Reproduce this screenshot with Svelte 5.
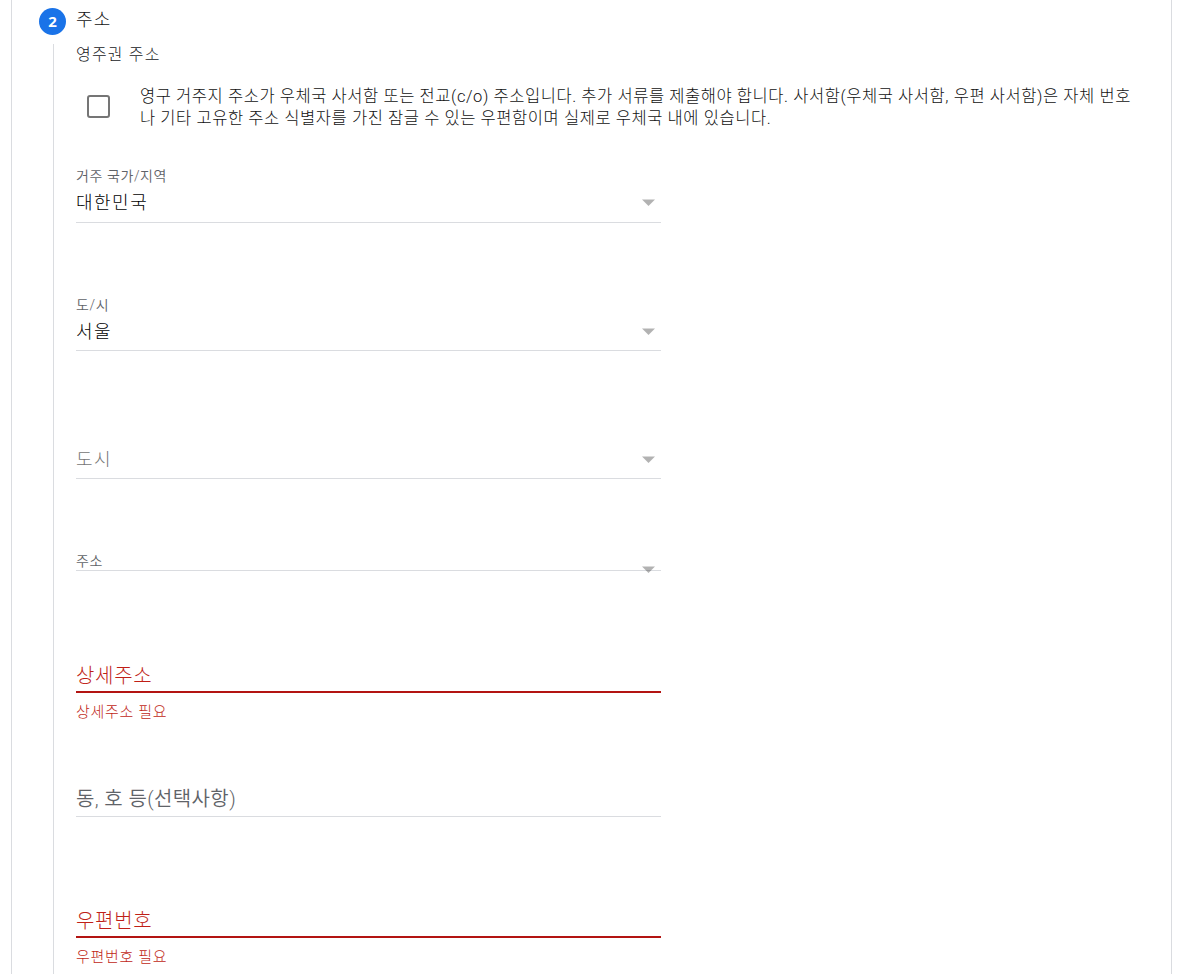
<script lang="ts">
	interface Field {
		id: string;
		kind: 'select' | 'text';
		label?: string;
		value?: string;
		placeholder?: string;
		error?: string;
	}

	const fields: Field[] = [
		{ id: 'country', kind: 'select', label: '거주 국가/지역', value: '대한민국' },
		{ id: 'province', kind: 'select', label: '도/시', value: '서울' },
		{ id: 'city', kind: 'select', placeholder: '도시' },
		{ id: 'street', kind: 'select', label: '주소' },
		{ id: 'detail', kind: 'text', placeholder: '상세주소', error: '상세주소 필요' },
		{ id: 'unit', kind: 'text', placeholder: '동, 호 등(선택사항)' },
		{ id: 'postal', kind: 'text', placeholder: '우편번호', error: '우편번호 필요' },
	];

	const poBoxText = [
		'영구 거주지 주소가 우체국 사서함 또는 전교(c/o) 주소입니다. 추가 서류를 제출해야 합니다. 사서함(우체국 사서함, 우편 사서함)은 자체 번호',
		'나 기타 고유한 주소 식별자를 가진 잠글 수 있는 우편함이며 실제로 우체국 내에 있습니다.',
	];

	let poBox = $state(false);
</script>

<main class="card">
	<div class="rail">
		<span class="step">2</span>
		<div class="line"></div>
	</div>

	<section class="content">
		<h2>주소</h2>
		<h3>영주권 주소</h3>

		<div class="po-box">
			<button
				class="checkbox"
				class:checked={poBox}
				role="checkbox"
				aria-checked={poBox}
				aria-label="사서함 주소"
				onclick={() => (poBox = !poBox)}></button>
			<p>
				{#each poBoxText as line}
					<span>{line}</span>
				{/each}
			</p>
		</div>

		{#each fields as field (field.id)}
			<div class="field {field.kind} {field.id}" class:invalid={field.error}>
				{#if field.label}
					<span class="label">{field.label}</span>
				{/if}
				<div class="control">
					<span class={field.value ? 'value' : 'placeholder'}>{field.value ?? field.placeholder ?? ''}</span>
					{#if field.kind === 'select'}
						<svg class="arrow" width="13" height="7" viewBox="0 0 13 7">
							<path d="M0 0.5h13L6.5 7z" fill="#000" fill-opacity="0.3" />
						</svg>
					{/if}
				</div>
				{#if field.error}
					<span class="error">{field.error}</span>
				{/if}
			</div>
		{/each}
	</section>
</main>

<style>
	:global(body) {
		background: #fff;
		overflow: hidden;
	}

	.card {
		display: flex;
		box-sizing: border-box;
		width: 1161px;
		height: 974px;
		margin-left: 11px;
		border: solid #dadce0;
		border-width: 0 1px;
		overflow: hidden;
		font-family: Roboto, 'Noto Sans CJK KR', sans-serif;
		font-weight: 300;
		color: #111;
	}

	.rail {
		display: flex;
		flex-direction: column;
		align-items: center;
		width: 27px;
		flex: none;
		margin: 8px 10px 0 27px;
	}

	.step {
		width: 27px;
		height: 27px;
		border-radius: 50%;
		background: #1a73e8;
		color: #fff;
		font: 700 15px/26px 'Open Sans', sans-serif;
		text-align: center;
	}

	.line {
		flex: 1;
		width: 1px;
		margin: 9px 0 0 2px;
		background: #dadce0;
	}

	.content {
		flex: 1;
	}

	h2,
	h3,
	p {
		margin: 0;
		font-weight: inherit;
	}

	h2 {
		height: 41px;
		font-size: 18px;
		line-height: 40px;
		letter-spacing: 1.3px;
	}

	h3 {
		height: 28px;
		font-size: 16px;
		line-height: 28px;
		letter-spacing: 1.2px;
		color: #202124;
	}

	.po-box {
		display: flex;
		align-items: flex-start;
		gap: 30px;
		height: 82px;
		margin-top: 17px;
	}

	.checkbox {
		flex: none;
		width: 23px;
		height: 23px;
		margin: 9px 0 0 11px;
		padding: 0;
		border: 2px solid #757575;
		border-radius: 3px;
		background: #fff;
	}

	.checkbox.checked {
		background: #1a73e8;
	}

	.po-box p {
		display: flex;
		flex-direction: column;
		font-size: 16.5px;
		line-height: 22px;
		letter-spacing: 0.57px;
		white-space: nowrap;
	}

	.field {
		display: flex;
		flex-direction: column;
		justify-content: flex-end;
		width: 585px;
		height: 55px;
		margin-bottom: 73px;
	}

	.label {
		font-size: 14px;
		font-weight: 350;
		line-height: 18px;
		letter-spacing: 0.6px;
		color: #5f6368;
	}

	.control {
		display: flex;
		align-items: center;
		justify-content: space-between;
		box-sizing: border-box;
		height: 37px;
		padding: 0 6px 5px 0;
		border-bottom: 1px solid #dadce0;
		font-size: 18px;
		letter-spacing: 1.5px;
	}

	.value {
		color: #000;
	}

	.placeholder {
		color: #757575;
	}

	.arrow {
		margin-top: 4px;
	}

	.country .control {
		padding-bottom: 7px;
	}

	.country .label {
		line-height: 16px;
		margin-bottom: 2px;
	}

	.street {
		height: 19px;
		margin-bottom: 85px;
	}

	.street .label {
		line-height: 20px;
		margin-bottom: -1px;
	}

	/* collapsed select: the arrow straddles the underline */
	.street .control {
		height: 1px;
		padding-bottom: 0;
	}

	.street .arrow {
		position: relative;
		top: -1px;
		margin-top: 0;
	}

	.text .control {
		padding-bottom: 1px;
		font-size: 20px;
		letter-spacing: 0.7px;
	}

	.text .placeholder {
		color: #5f6368;
	}

	.unit .placeholder {
		font-weight: 350;
		letter-spacing: 0.4px;
	}

	.detail,
	.postal {
		height: 68px;
	}

	.detail {
		margin-bottom: 56px;
	}

	.unit {
		height: 37px;
		margin-bottom: 84px;
	}

	.invalid .control {
		padding: 2px 6px 0 0;
		border-bottom: 2px solid #b31412;
	}

	.invalid .placeholder,
	.error {
		color: #c01f17;
	}

	.error {
		height: 31px;
		font-size: 15px;
		line-height: 38px;
		letter-spacing: 0.7px;
	}
</style>
